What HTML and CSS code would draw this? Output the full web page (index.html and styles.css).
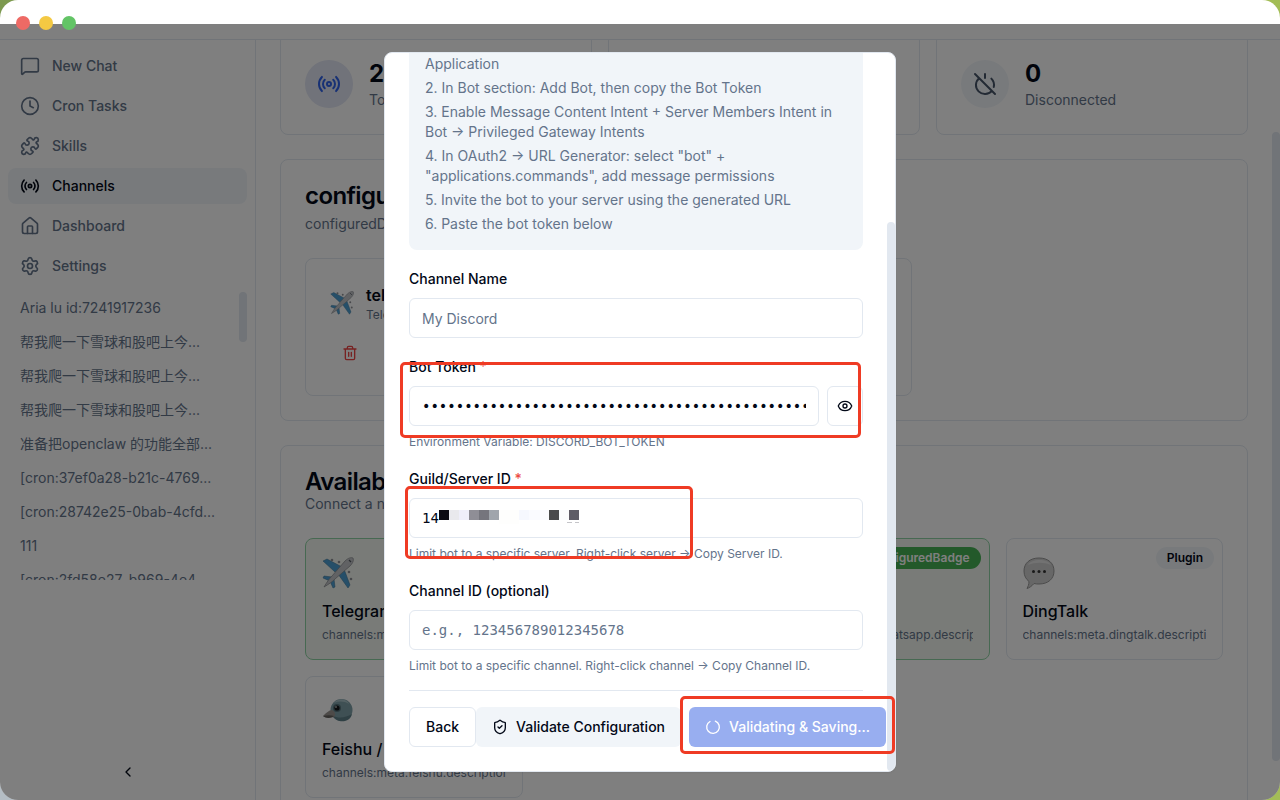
FILE: index.html
```html
<!DOCTYPE html>
<html lang="en">
<head>
    <meta charset="UTF-8">
    <title>Channels</title>
    <meta name="viewport" content="width=device-width, initial-scale=1">
    <link rel="stylesheet" href="styles.css">
</head>
<body>
<!-- shared icons -->
<svg class="sprite" aria-hidden="true">
    <symbol id="i-message" viewBox="0 0 24 24"><path d="M22 17a2 2 0 0 1-2 2H6.828a2 2 0 0 0-1.414.586l-2.202 2.202A.71.71 0 0 1 2 21.286V5a2 2 0 0 1 2-2h16a2 2 0 0 1 2 2z"/></symbol>
    <symbol id="i-clock" viewBox="0 0 24 24"><circle cx="12" cy="12" r="10"/><path d="M12 6v6l4 2"/></symbol>
    <symbol id="i-puzzle" viewBox="0 0 24 24"><path d="M15.39 4.39a1 1 0 0 0 1.68-.474 2.5 2.5 0 1 1 3.014 3.015 1 1 0 0 0-.474 1.68l1.683 1.682a2.414 2.414 0 0 1 0 3.414L19.61 15.39a1 1 0 0 1-1.68-.474 2.5 2.5 0 1 0-3.014 3.015 1 1 0 0 1 .474 1.68l-1.683 1.682a2.414 2.414 0 0 1-3.414 0L8.61 19.61a1 1 0 0 0-1.68.474 2.5 2.5 0 1 1-3.014-3.015 1 1 0 0 0 .474-1.68l-1.683-1.682a2.414 2.414 0 0 1 0-3.414L4.39 8.61a1 1 0 0 1 1.68.474 2.5 2.5 0 1 0 3.014-3.015 1 1 0 0 1-.474-1.68l1.683-1.682a2.414 2.414 0 0 1 3.414 0z"/></symbol>
    <symbol id="i-radio" viewBox="0 0 24 24"><path d="M16.247 7.761a6 6 0 0 1 0 8.478M19.075 4.933a10 10 0 0 1 0 14.134M4.925 19.067a10 10 0 0 1 0-14.134M7.753 16.239a6 6 0 0 1 0-8.478"/><circle cx="12" cy="12" r="2"/></symbol>
    <symbol id="i-house" viewBox="0 0 24 24"><path d="M15 21v-8a1 1 0 0 0-1-1h-4a1 1 0 0 0-1 1v8"/><path d="M3 10a2 2 0 0 1 .709-1.528l7-6a2 2 0 0 1 2.582 0l7 6A2 2 0 0 1 21 10v9a2 2 0 0 1-2 2H5a2 2 0 0 1-2-2z"/></symbol>
    <symbol id="i-settings" viewBox="0 0 24 24"><path d="M9.671 4.136a2.34 2.34 0 0 1 4.659 0 2.34 2.34 0 0 0 3.319 1.915 2.34 2.34 0 0 1 2.33 4.033 2.34 2.34 0 0 0 0 3.831 2.34 2.34 0 0 1-2.33 4.033 2.34 2.34 0 0 0-3.319 1.915 2.34 2.34 0 0 1-4.659 0 2.34 2.34 0 0 0-3.32-1.915 2.34 2.34 0 0 1-2.33-4.033 2.34 2.34 0 0 0 0-3.831A2.34 2.34 0 0 1 6.35 6.051a2.34 2.34 0 0 0 3.319-1.915"/><circle cx="12" cy="12" r="3"/></symbol>
    <symbol id="i-chevron" viewBox="0 0 24 24"><path d="m15 18-6-6 6-6"/></symbol>
    <symbol id="i-poweroff" viewBox="0 0 24 24"><path d="M18.36 6.64A9 9 0 0 1 20.77 15M6.16 6.16a9 9 0 1 0 12.68 12.68M12 2v4M2 2l20 20"/></symbol>
    <symbol id="i-trash" viewBox="0 0 24 24"><path d="M10 11v6M14 11v6M19 6v14a2 2 0 0 1-2 2H7a2 2 0 0 1-2-2V6M3 6h18M8 6V4a2 2 0 0 1 2-2h4a2 2 0 0 1 2 2v2"/></symbol>
    <symbol id="i-eye" viewBox="0 0 24 24"><path d="M2.062 12.348a1 1 0 0 1 0-.696 10.75 10.75 0 0 1 19.876 0 1 1 0 0 1 0 .696 10.75 10.75 0 0 1-19.876 0"/><circle cx="12" cy="12" r="3"/></symbol>
    <symbol id="i-shield" viewBox="0 0 24 24"><path d="M20 13c0 5-3.5 7.5-7.66 8.95a1 1 0 0 1-.67-.01C7.5 20.5 4 18 4 13V6a1 1 0 0 1 1-1c2 0 4.5-1.2 6.24-2.72a1.17 1.17 0 0 1 1.52 0C14.51 3.81 17 5 19 5a1 1 0 0 1 1 1z"/><path d="m9 12 2 2 4-4"/></symbol>
    <symbol id="i-loader" viewBox="0 0 24 24"><path d="M15.5 3.2a9.500 9.500 0 1 1-8 .5"/></symbol>
    <symbol id="e-plane" viewBox="0 0 32 32">
        <g fill="#4d9fd2" stroke="#3a6f90" stroke-width=".5">
            <path d="M20 10 5 2 1 4l12 11z"/>
            <path d="m22 12 6 16-2 3-10-14z"/>
            <path d="m10 20-8-1-1 2 7 3z"/>
            <path d="m12 22 1 8-2 1-3-7z"/>
        </g>
        <g fill="#909398"><circle cx="10" cy="3" r="1.3"/><circle cx="17" cy="5" r="1.3"/><circle cx="29" cy="22" r="1.3"/><circle cx="27" cy="15" r="1.3"/></g>
        <path d="M31 1c1 2 0 5-3 8L13 22c-3 3-6 5-11 8 3-5 5-8 8-11L23 4c3-3 6-4 8-3z" fill="#c2c4c8" stroke="#85888d" stroke-width=".7"/>
        <path d="m27 3 2 2" stroke="#555b63" stroke-width="1.2"/>
    </symbol>
    <symbol id="e-bird" viewBox="0 0 32 32">
        <circle cx="19.500" cy="15" r="11" fill="#7fa0a8"/>
        <path d="M12 8c4-5 12-5 15 1-5-3-10-3-15-1z" fill="#a9c3c8"/>
        <path d="M10 20c6 4 13 3 20-1-2 9-15 10-20 1z" fill="#5f8089"/>
        <path d="M10 15c-3 0-6 3-9 6 3 2 7 2 11 1 2-2 1-6-2-7z" fill="#9a9591"/>
        <path d="M1 21c4-1 8-1 11 0-2 2-8 3-11 0z" fill="#65625f"/>
        <circle cx="15" cy="13" r="4" fill="#55727a"/><circle cx="15" cy="13" r="2.600" fill="#15181b"/><circle cx="14" cy="12" r=".8" fill="#fff"/>
    </symbol>
    <symbol id="e-bubble" viewBox="0 0 32 32">
        <path d="M16 1c9 0 15 5 15 13s-6 13-15 13c-2 0-3 0-5-.5C9 29 6 31 4 31.500c1-2 2-4 2-7C3 22 1 19 1 14 1 6 7 1 16 1z" fill="#cfcfcf" stroke="#989898"/>
        <path d="M5 8c3-6 19-7 23 0-7-3-16-3-23 0z" fill="#e4e4e4"/>
        <g fill="#333"><circle cx="10.500" cy="14.500" r="1.500"/><circle cx="16" cy="14.500" r="1.500"/><circle cx="21.500" cy="14.500" r="1.500"/></g>
    </symbol>
</svg>

<div class="window">
    <header class="titlebar">
        <span class="light red"></span>
        <span class="light yellow"></span>
        <span class="light green"></span>
    </header>

    <div class="layout">
        <aside class="sidebar">
            <nav class="nav">
                <a class="nav-item" href="#"><svg class="icon"><use href="#i-message"/></svg>New Chat</a>
                <a class="nav-item" href="#"><svg class="icon"><use href="#i-clock"/></svg>Cron Tasks</a>
                <a class="nav-item" href="#"><svg class="icon"><use href="#i-puzzle"/></svg>Skills</a>
                <a class="nav-item active" href="#"><svg class="icon"><use href="#i-radio"/></svg>Channels</a>
                <a class="nav-item" href="#"><svg class="icon"><use href="#i-house"/></svg>Dashboard</a>
                <a class="nav-item" href="#"><svg class="icon"><use href="#i-settings"/></svg>Settings</a>
            </nav>
            <div class="history">
                <a href="#">Aria lu id:7241917236</a>
                <a href="#">帮我爬一下雪球和股吧上今...</a>
                <a href="#">帮我爬一下雪球和股吧上今...</a>
                <a href="#">帮我爬一下雪球和股吧上今...</a>
                <a href="#">准备把openclaw 的功能全部...</a>
                <a href="#">[cron:37ef0a28-b21c-4769...</a>
                <a href="#">[cron:28742e25-0bab-4cfd...</a>
                <a href="#">111</a>
                <a href="#">[cron:2fd58e27-b969-4e4...</a>
                <span class="history-thumb"></span>
            </div>
            <button class="collapse" aria-label="Collapse sidebar"><svg class="icon small"><use href="#i-chevron"/></svg></button>
        </aside>

        <main class="main">
            <div class="content">
                <div class="stats">
                    <div class="card stat">
                        <span class="stat-icon blue"><svg class="icon large"><use href="#i-radio"/></svg></span>
                        <div><p class="stat-value">2</p><p class="muted">Total Channels</p></div>
                    </div>
                    <div class="card stat"></div>
                    <div class="card stat">
                        <span class="stat-icon"><svg class="icon large"><use href="#i-poweroff"/></svg></span>
                        <div><p class="stat-value">0</p><p class="muted">Disconnected</p></div>
                    </div>
                </div>

                <section class="card section">
                    <div class="section-head spaced">
                        <h2>configured</h2>
                        <p class="muted">configuredDesc</p>
                    </div>
                    <div class="configured">
                        <div class="card channel">
                            <div class="channel-head">
                                <svg class="emoji-small"><use href="#e-plane"/></svg>
                                <div><h3>telegram</h3><p class="tiny">Telegram</p></div>
                            </div>
                            <button class="delete" aria-label="Delete channel"><svg class="icon small"><use href="#i-trash"/></svg></button>
                        </div>
                        <div class="card channel"></div>
                    </div>
                </section>

                <section class="card section">
                    <div class="section-head">
                        <h2>Available Channels</h2>
                        <p class="muted">Connect a new channel</p>
                    </div>
                    <div class="tiles">
                        <button class="tile on">
                            <svg class="emoji"><use href="#e-plane"/></svg>
                            <span class="tile-name">Telegram</span>
                            <span class="tile-desc">channels:meta.telegram.description</span>
                        </button>
                        <button class="tile"></button>
                        <button class="tile on">
                            <span class="badge ok">configuredBadge</span>
                            <svg class="emoji"></svg>
                            <span class="tile-name">WhatsApp</span>
                            <span class="tile-desc">channels:meta.whatsapp.description</span>
                        </button>
                        <button class="tile">
                            <span class="badge">Plugin</span>
                            <svg class="emoji"><use href="#e-bubble"/></svg>
                            <span class="tile-name">DingTalk</span>
                            <span class="tile-desc">channels:meta.dingtalk.description</span>
                        </button>
                        <button class="tile">
                            <svg class="emoji"><use href="#e-bird"/></svg>
                            <span class="tile-name">Feishu / Lark</span>
                            <span class="tile-desc">channels:meta.feishu.description</span>
                        </button>
                    </div>
                </section>
            </div>
            <span class="main-thumb"></span>
        </main>
    </div>

    <div class="overlay">
        <form class="modal" role="dialog" aria-label="Channel setup">
            <div class="steps">
                <p>Application</p>
                <p>2. In Bot section: Add Bot, then copy the Bot Token</p>
                <p>3. Enable Message Content Intent + Server Members Intent in Bot → Privileged Gateway Intents</p>
                <p>4. In OAuth2 → URL Generator: select "bot" + "applications.commands", add message permissions</p>
                <p>5. Invite the bot to your server using the generated URL</p>
                <p>6. Paste the bot token below</p>
            </div>
            <div class="field">
                <label for="name">Channel Name</label>
                <input id="name" type="text" placeholder="My Discord">
            </div>
            <div class="field">
                <label for="token">Bot Token <span class="required">*</span></label>
                <div class="input-row">
                    <input id="token" class="mono" type="password" value="000000000000000000000000000000000000000000000000000000000000">
                    <button type="button" class="btn outline square" aria-label="Show token"><svg class="icon small"><use href="#i-eye"/></svg></button>
                </div>
                <p class="tiny">Environment Variable: DISCORD_BOT_TOKEN</p>
                <span class="mark mark-token"></span>
            </div>
            <div class="field">
                <label for="guild">Guild/Server ID <span class="required">*</span></label>
                <input id="guild" class="mono" type="text" value="14">
                <p class="tiny">Limit bot to a specific server. Right-click server → Copy Server ID.</p>
                <svg class="mosaic" viewBox="0 0 142 14" aria-hidden="true">
                    <path fill="#0b0a12" d="M1 0h10v10H1z"/><path fill="#e9e9ed" d="M11 0h10v10H11z"/><path fill="#efeffa" d="M21 0h10v10H21z"/>
                    <path fill="#8f8e96" d="M31 0h10v10H31z"/><path fill="#75757d" d="M41 0h10v10H41z"/><path fill="#a0a5ac" d="M51 0h10v10H51z"/>
                    <path fill="#fefefd" d="M61 0h20v14H61z"/><path fill="#f6f8fe" d="M81 0h10v10H81z"/><path fill="#fafbff" d="M91 0h20v10H91z"/>
                    <path fill="#4a4b4c" d="M111 0h10v10h-10z"/><path fill="#fafdfd" d="M121 0h10v10h-10z"/><path fill="#5e5d66" d="M131 0h10v10h-10z"/>
                    <path fill="#c5c5c9" d="M129 12h5v1h-5zM137 12h4v1h-4z"/>
                </svg>
                <span class="mark mark-guild"></span>
            </div>
            <div class="field">
                <label for="channel">Channel ID (optional)</label>
                <input id="channel" class="mono" type="text" placeholder="e.g., 123456789012345678">
                <p class="tiny">Limit bot to a specific channel. Right-click channel → Copy Channel ID.</p>
            </div>
            <div class="actions">
                <button type="button" class="btn outline">Back</button>
                <div class="actions-right">
                    <button type="button" class="btn secondary"><svg class="icon small"><use href="#i-shield"/></svg>Validate Configuration</button>
                    <div class="save">
                        <button type="submit" class="btn primary" disabled><svg class="icon small"><use href="#i-loader"/></svg>Validating &amp; Saving...</button>
                        <span class="mark mark-save"></span>
                    </div>
                </div>
            </div>
            <span class="modal-thumb"></span>
        </form>
    </div>
</div>
</body>
</html>
```
FILE: styles.css
```css
* { box-sizing: border-box; }
body {
    margin: 0;
    font-family: Inter, "Noto Sans CJK SC", sans-serif;
    font-size: 14px;
    line-height: 20px;
    color: #020817;
    background: radial-gradient(circle at 0 100%, #b4bdc4 40px, transparent 41px), linear-gradient(100deg, #7d9a50, #a3bd56 90%);
}
h2, h3, p { margin: 0; }
a { color: inherit; text-decoration: none; }
button, input { font: inherit; color: inherit; }
.sprite { position: absolute; width: 0; height: 0; }
.icon { width: 20px; height: 20px; flex: none; fill: none; stroke: currentColor; stroke-width: 2; stroke-linecap: round; stroke-linejoin: round; }
.icon.small { width: 16px; height: 16px; }
.icon.large { width: 24px; height: 24px; }
.muted { color: #64748b; }
.tiny { font-size: 12px; line-height: 16px; color: #64748b; }

/* window */
.window {
    position: relative;
    display: flex;
    flex-direction: column;
    height: 100vh;
    overflow: hidden;
    background: #fff;
    border-radius: 18px;
}
.titlebar { display: flex; gap: 9px; flex: none; height: 40px; padding: 16px; border-bottom: 1px solid #e2e8f0; }
.light { z-index: 3; width: 14px; height: 14px; border-radius: 50%; }
.red { background: #ee6a65; }
.yellow { background: #f4c943; }
.green { background: #63c466; }
.layout { display: flex; flex: 1; min-height: 0; }

/* sidebar */
.sidebar { display: flex; flex-direction: column; flex: none; width: 256px; padding: 8px; border-right: 1px solid #e2e8f0; }
.nav { display: flex; flex-direction: column; gap: 4px; font-weight: 500; color: #64748b; }
.nav-item { display: flex; align-items: center; gap: 12px; padding: 8px 12px; border-radius: 8px; }
.nav-item.active { background: #f1f5f9; color: #020817; }
.history { position: relative; display: flex; flex-direction: column; gap: 2px; height: 36vh; margin-top: 8px; overflow: hidden; color: #64748b; }
.history a { flex: none; padding: 6px 12px; white-space: nowrap; }
.history-thumb { position: absolute; top: 0; right: 0; width: 8px; height: 50px; border-radius: 4px; background: #e2e8f0; }
.collapse { display: flex; align-items: center; justify-content: center; height: 40px; margin-top: auto; border: 0; background: none; }

/* page */
.main { position: relative; flex: 1; min-width: 0; padding: 0 32px 0 24px; overflow: hidden; }
.main-thumb { position: absolute; top: 92px; bottom: 39px; right: 0; width: 8px; border-radius: 4px; background: #e2e8f0; }
.content { display: flex; flex-direction: column; gap: 24px; margin-top: -7px; }
.card { border: 1px solid #e2e8f0; border-radius: 8px; }
.stats { display: grid; grid-template-columns: repeat(3, 1fr); gap: 16px; }
.stat { display: flex; align-items: center; gap: 16px; padding: 24px; }
.stat-icon { display: flex; align-items: center; justify-content: center; width: 48px; height: 48px; border-radius: 50%; background: #f1f5f9; color: #475569; }
.stat-icon.blue { background: #e2e6f4; color: #2f62ea; }
.stat-value { font-size: 24px; line-height: 32px; font-weight: 700; }
.section { padding: 24px; }
.section-head { display: flex; flex-direction: column; margin-bottom: 24px; }
.section-head.spaced { gap: 6px; }
.section h2 { font-size: 24px; line-height: 24px; font-weight: 600; letter-spacing: -0.025em; }
.configured { display: grid; grid-template-columns: repeat(3, 1fr); gap: 16px; }
.channel { padding: 24px; }
.channel-head { display: flex; align-items: center; gap: 12px; }
.channel h3 { font-size: 16px; line-height: 24px; font-weight: 600; }
.emoji-small { width: 24px; height: 24px; }
.delete { display: flex; align-items: center; margin-top: 12px; height: 36px; padding: 0 12px; border: 0; background: none; color: #ef4444; }
.tiles { display: grid; grid-template-columns: repeat(4, 1fr); gap: 16px; }
.tile { position: relative; display: flex; flex-direction: column; align-items: flex-start; min-width: 0; padding: 16px; border: 1px solid #e2e8f0; border-radius: 8px; background: none; text-align: left; }
.tile.on { border-color: #8fd3a4; background: #f3f7f0; }
.emoji { width: 32px; height: 36px; margin-bottom: 8px; }
.tile-name { font-size: 16px; line-height: 24px; font-weight: 500; }
.tile-desc { width: 100%; margin-top: 4px; overflow: hidden; white-space: nowrap; font-size: 12px; line-height: 16px; color: #64748b; }
.badge { position: absolute; top: 8px; right: 8px; padding: 3px 11px; border-radius: 11px; background: #f1f5f9; font-size: 12px; line-height: 16px; font-weight: 600; }
.badge.ok { background: #46b254; color: #fff; }

/* dialog */
.overlay { position: absolute; inset: 24px 0 0; z-index: 2; display: flex; align-items: center; justify-content: center; background: rgba(0, 0, 0, 0.5); }
.modal {
    position: relative;
    display: flex;
    flex-direction: column;
    justify-content: flex-end;
    gap: 16px;
    width: 512px;
    height: 90vh;
    padding: 24px 32px 24px 24px;
    overflow: hidden;
    background: #fff;
    border: 1px solid #e2e8f0;
    border-radius: 8px;
    box-shadow: 0 1px 2px rgba(0, 0, 0, 0.05);
}
.modal-thumb { position: absolute; top: 169px; bottom: 0; right: 0; width: 8px; border-radius: 4px; background: #e2e8f0; }
.steps { display: flex; flex-direction: column; gap: 4px; padding: 16px; border-radius: 8px; background: #f1f5f9; color: #64748b; }
.field { position: relative; display: flex; flex-direction: column; gap: 8px; }
.field label { padding-top: 2px; line-height: 22px; font-weight: 500; }
.required { color: #ec4c44; }
.field input { width: 100%; min-width: 0; height: 40px; padding: 8px 12px; border: 1px solid #e2e8f0; border-radius: 6px; background: #fff; outline: none; }
.field input::placeholder { color: #64748b; opacity: 1; }
.field .mono { font-family: "DejaVu Sans Mono", monospace; }
.input-row { display: flex; gap: 8px; }
.btn { display: flex; align-items: center; justify-content: center; gap: 8px; flex: none; height: 40px; padding: 0 16px; border: 0; border-radius: 6px; background: #fff; font-weight: 500; white-space: nowrap; }
.btn.outline { border: 1px solid #e2e8f0; }
.btn.square { width: 36px; padding: 0; }
.btn.secondary { background: #f1f5f9; }
.btn.primary { background: #98aef0; color: #fff; }
.actions { display: flex; justify-content: space-between; padding-top: 16px; border-top: 1px solid #e2e8f0; }
.actions-right { display: flex; gap: 8px; }
.save { position: relative; }
.mosaic { position: absolute; top: 44px; left: 29px; width: 142px; height: 14px; }

/* highlight frames */
.mark { position: absolute; z-index: 1; border: 3px solid #ef3b24; border-radius: 5px; pointer-events: none; }
.mark-token { inset: 8px 2px 12px -9px; }
.mark-guild { inset: 20px 170px 3px -4px; }
.mark-save { inset: -11px -9px -7px -9px; }
```
